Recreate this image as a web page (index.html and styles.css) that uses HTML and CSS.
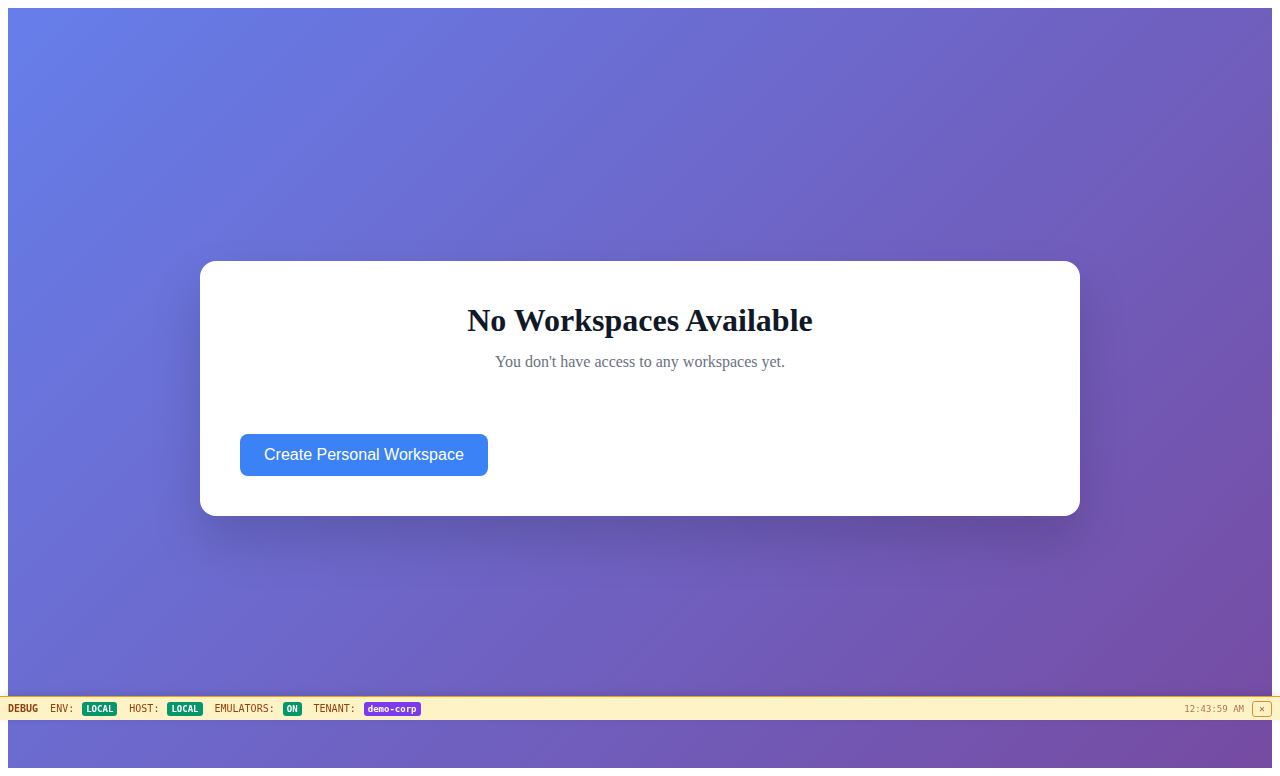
FILE: index.html
```html
<!DOCTYPE html>
<html lang="en">
<head>
<meta charset="utf-8">
<meta name="viewport" content="width=device-width, initial-scale=1">
<title>Workspaces</title>
<link rel="stylesheet" href="styles.css">
</head>
<body>
<main class="page">
  <section class="card">
    <header class="card-header">
      <h1 class="title">No Workspaces Available</h1>
      <p class="subtitle">You don't have access to any workspaces yet.</p>
    </header>
    <button class="create-button" type="button">Create Personal Workspace</button>
  </section>
</main>
<aside class="debug-bar" aria-label="Debug information">
  <strong>DEBUG</strong>
  <span class="item">ENV: <span class="badge">LOCAL</span></span>
  <span class="item">HOST: <span class="badge">LOCAL</span></span>
  <span class="item">EMULATORS: <span class="badge">ON</span></span>
  <span class="item">TENANT: <span class="badge badge-tenant">demo-corp</span></span>
  <span class="right">
    <time class="time">12:43:59 AM</time>
    <button class="close-button" type="button" aria-label="Close debug bar">✕</button>
  </span>
</aside>
</body>
</html>
```

FILE: styles.css
```css
body {
  margin: 8px;
  font-family: "Liberation Serif", "Times New Roman", serif;
}

.page {
  box-sizing: border-box;
  min-height: calc(100vh - 16px);
  padding: 20px;
  display: flex;
  align-items: center;
  justify-content: center;
  background: linear-gradient(135deg, #667eea 0%, #764ba2 100%);
}

.card {
  box-sizing: border-box;
  width: 100%;
  max-width: 880px;
  padding: 40px;
  border-radius: 16px;
  background: #fff;
  box-shadow: 0 25px 50px rgba(0, 0, 0, 0.15);
}

.card-header {
  margin-bottom: 60px;
  text-align: center;
}

.title {
  margin: 0 0 11px;
  font-size: 32px;
  line-height: 38px;
  color: #111827;
}

.subtitle {
  margin: 0;
  font-size: 16px;
  line-height: 24px;
  color: #6b7280;
}

.create-button {
  padding: 12px 24px;
  border: 0;
  border-radius: 8px;
  background: #3b82f6;
  color: #fff;
  font-family: "Liberation Sans", Arial, sans-serif;
  font-size: 16px;
  line-height: 18px;
  cursor: pointer;
}

.debug-bar {
  position: fixed;
  right: 0;
  bottom: 56px;
  left: 0;
  box-sizing: border-box;
  height: 24px;
  padding: 1px 8px 0;
  display: flex;
  align-items: center;
  gap: 12px;
  border-top: 1px solid #f59e0b;
  background: #fef3c7;
  box-shadow: 0 -2px 8px rgba(0, 0, 0, 0.1);
  color: #92400e;
  font-family: "DejaVu Sans Mono", monospace;
  font-size: 10px;
  line-height: 12px;
}

.item {
  display: flex;
  align-items: center;
  gap: 8px;
}

.badge {
  padding: 1px 4px;
  border-radius: 3px;
  background: #059669;
  color: #fff;
  font-size: 9px;
  font-weight: bold;
}

.badge-tenant {
  background: #7c3aed;
}

.right {
  margin-left: auto;
  display: flex;
  align-items: center;
  gap: 8px;
}

.time {
  font-size: 9px;
  opacity: 0.7;
}

.close-button {
  padding: 1px 6px;
  border: 1px solid #d97706;
  border-radius: 3px;
  background: transparent;
  color: #92400e;
  font-family: inherit;
  font-size: 10px;
  line-height: 12px;
  cursor: pointer;
  opacity: 0.8;
}
```
